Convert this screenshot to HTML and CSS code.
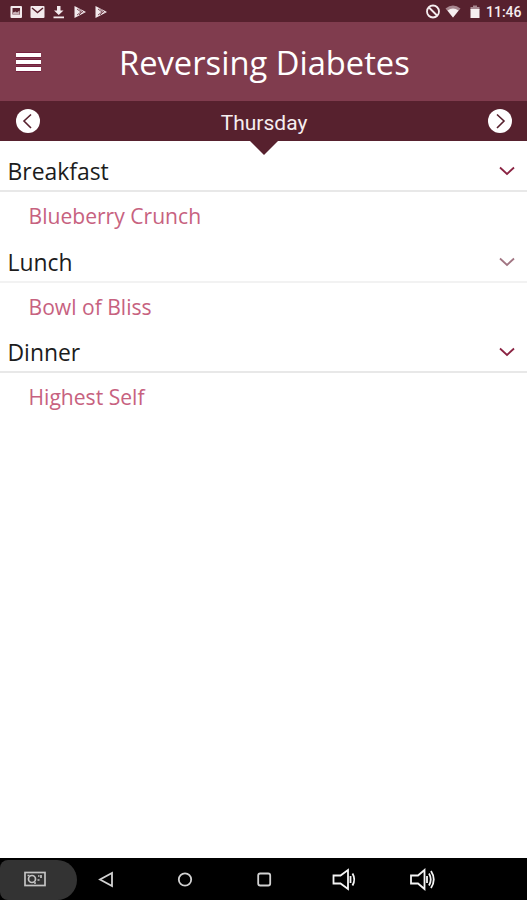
FILE: index.html
```html
<!DOCTYPE html>
<html lang="en">
<head>
  <meta charset="UTF-8">
  <meta name="viewport" content="width=device-width, initial-scale=1.0">
  <title>Reversing Diabetes</title>
  <link rel="stylesheet" href="styles.css">
</head>
<body>
  <div class="status-bar">
    <svg class="status-left" width="110" height="22" viewBox="0 0 110 22" fill="#f3e9ec">
      <path fill-rule="evenodd" d="M11.500 6h9.500q1 0 1 1v10q0 1-1 1H11.500q-1 0-1-1V7q0-1 1-1zM12.500 8v6.500h7.500V8z"/>
      <path d="M13 14.500V12.500l2.500-1 1.500 1 2.500-2v4z" fill="#c9b2b9"/>
      <rect x="30.500" y="6" width="14" height="12" rx="1"/>
      <path d="M32 8l5.500 4.500L43 8" fill="none" stroke="#57212e" stroke-width="1.500"/>
      <path d="M57 6h3.500v4.500h3L58.750 15 54 10.500h3zM53.500 16.500h10.500v1.700H53.500z"/>
      <path d="M74.500 6L86 12l-11.500 6z"/>
      <path d="M77 9l4 3-4 3M79 8.500l4 4M79 15l4-4" fill="none" stroke="#81505c"/>
      <path d="M95.500 6L107 12l-11.500 6z"/>
      <path d="M98 9l4 3-4 3M100 8.500l4 4M100 15l4-4" fill="none" stroke="#81505c"/>
    </svg>
    <svg class="status-right" width="60" height="22" viewBox="0 0 60 22" fill="#f6eef0">
      <circle cx="8" cy="11.500" r="6" fill="none" stroke="#f6eef0" stroke-width="1.800"/>
      <path d="M4 7.500l8 8" stroke="#f6eef0" stroke-width="1.800"/>
      <path d="M20.500 8.500Q28 2.500 35.500 8.500L28 17.500z" fill="#a88790"/>
      <path d="M22.500 10.500Q28 6.500 33.500 10.500L28 17.500z"/>
      <path d="M48 5.500h4v1.500h2.500v3h-9V7H48z" fill="#a88790"/>
      <rect x="45.500" y="9" width="9" height="9"/>
    </svg>
    <span class="clock">11:46</span>
  </div>

  <div class="header">
    <button class="menu-btn" aria-label="Menu">
      <span></span>
      <span></span>
      <span></span>
    </button>
    <h1>Reversing Diabetes</h1>
  </div>

  <div class="day-bar">
    <svg width="24" height="24" viewBox="0 0 24 24">
      <circle cx="12" cy="12" r="12" fill="#fff"/>
      <path d="M15 5.500L8 12l7 7" fill="none" stroke="#57212e" stroke-width="1.600"/>
    </svg>
    <span class="day">Thursday</span>
    <svg width="24" height="24" viewBox="0 0 24 24">
      <circle cx="12" cy="12" r="12" fill="#fff"/>
      <path d="M9 5.500l7 6.500-7 7" fill="none" stroke="#57212e" stroke-width="1.600"/>
    </svg>
    <div class="pointer"></div>
  </div>

  <div class="meals">
    <div class="meal">
      <div class="meal-title">
        <h2>Breakfast</h2>
        <svg class="chevron" width="16" height="10" viewBox="0 0 16 10"><path d="M1 1.500l7 6.500 7-6.500"/></svg>
      </div>
      <p class="recipe">Blueberry Crunch</p>
    </div>
    <div class="meal soft">
      <div class="meal-title">
        <h2>Lunch</h2>
        <svg class="chevron" width="16" height="10" viewBox="0 0 16 10"><path d="M1 1.500l7 6.500 7-6.500"/></svg>
      </div>
      <p class="recipe">Bowl of Bliss</p>
    </div>
    <div class="meal">
      <div class="meal-title">
        <h2>Dinner</h2>
        <svg class="chevron" width="16" height="10" viewBox="0 0 16 10"><path d="M1 1.500l7 6.500 7-6.500"/></svg>
      </div>
      <p class="recipe">Highest Self</p>
    </div>
  </div>

  <div class="nav-bar">
    <div class="nav-shot">
      <svg width="22" height="16" viewBox="0 0 22 16" fill="none" stroke="#c4c4c4" stroke-width="1.700">
        <rect x="1" y="1.500" width="20" height="13"/>
        <circle cx="8" cy="8" r="3.500"/>
        <path d="M3.500 4.500h2M14 5h1.500M17 4v3M13.500 9h2M10 12h2"/>
      </svg>
    </div>
    <svg class="nav-icons" width="360" height="42" viewBox="0 0 360 42" fill="none" stroke="#d2d2d2" stroke-width="1.800">
      <path d="M35 15v13L23 21.500z"/>
      <circle cx="108" cy="21.500" r="6.200"/>
      <rect x="181.200" y="15.500" width="12" height="12" rx="2"/>
      <g stroke="#f4f4f4">
        <path d="M256.500 17.500h7l7.500-5.500v19l-7.500-5.500h-7zM273.500 18v7M275.500 15.500q3.500 6 0 12"/>
        <path d="M334 17.500h7l6.500-5.500v19l-6.500-5.500h-7zM350 18v7M352 15.500q3.500 6 0 12M354 13q5.500 8.500 0 17"/>
      </g>
    </svg>
  </div>
</body>
</html>
```

FILE: styles.css
```css
* {
  box-sizing: border-box;
}
body {
  margin: 0;
  height: 900px;
  display: flex;
  flex-direction: column;
  background: #fff;
  font-family: "Open Sans", "Noto Sans", sans-serif;
  overflow: hidden;
}
svg {
  display: block;
  flex-shrink: 0;
}
h1, h2, p {
  margin: 0;
  font-weight: 400;
}

.status-bar {
  height: 22px;
  display: flex;
  background: #57212e;
}
.status-right {
  margin-left: 315px;
}
.clock {
  margin-left: 1px;
  font: 500 14px/24px Roboto, sans-serif;
  color: #f6eef0;
}

.header {
  height: 79px;
  padding: 1px 16px 0;
  display: flex;
  align-items: center;
  background: #803c4e;
}
.menu-btn {
  width: 25px;
  padding: 0;
  border: none;
  background: none;
  display: flex;
  flex-direction: column;
  gap: 3px;
}
.menu-btn span {
  height: 4px;
  background: #fff;
  box-shadow: 0 -1px #75203f, 0 1px #75203f;
}
.header h1 {
  flex: 1;
  margin-left: 78px;
  padding-top: 1px;
  font-size: 32.7px;
  line-height: 44px;
  color: #fff;
  white-space: nowrap;
}

.day-bar {
  position: relative;
  height: 40px;
  padding: 0 15px 0 16px;
  display: flex;
  align-items: center;
  justify-content: space-between;
  background: #57212e;
}
.day {
  padding-top: 3px;
  font: 400 21px/30px Roboto, sans-serif;
  color: #f6eef0;
}
.pointer {
  position: absolute;
  top: 39px;
  left: 249px;
  border: 15px solid transparent;
  border-top-color: #57212e;
  border-bottom: none;
}

.meals {
  flex: 1;
}
.meal {
  height: 90.5px;
}
.meal-title {
  height: 51px;
  padding: 10px 12px 0 7.5px;
  display: flex;
  justify-content: space-between;
  border-bottom: 2px solid #e8e8e8;
}
.meal h2 {
  font-size: 22.9px;
  line-height: 41px;
  color: #1c1c1c;
}
.chevron {
  margin-top: 15px;
  fill: none;
  stroke: #8a2342;
  stroke-width: 1.8;
}
.soft .meal-title {
  border-color: #f2f2f2;
}
.soft .chevron {
  stroke: #a17582;
}
.recipe {
  padding-left: 28.5px;
  font-size: 21.1px;
  line-height: 48px;
  color: #c7627f;
}

.nav-bar {
  height: 42px;
  display: flex;
  background: #000;
}
.nav-shot {
  width: 77px;
  height: 40px;
  margin-top: 2px;
  padding: 11px 0 0 24px;
  border-radius: 8px 20px 20px 8px;
  background: #333;
}
```
